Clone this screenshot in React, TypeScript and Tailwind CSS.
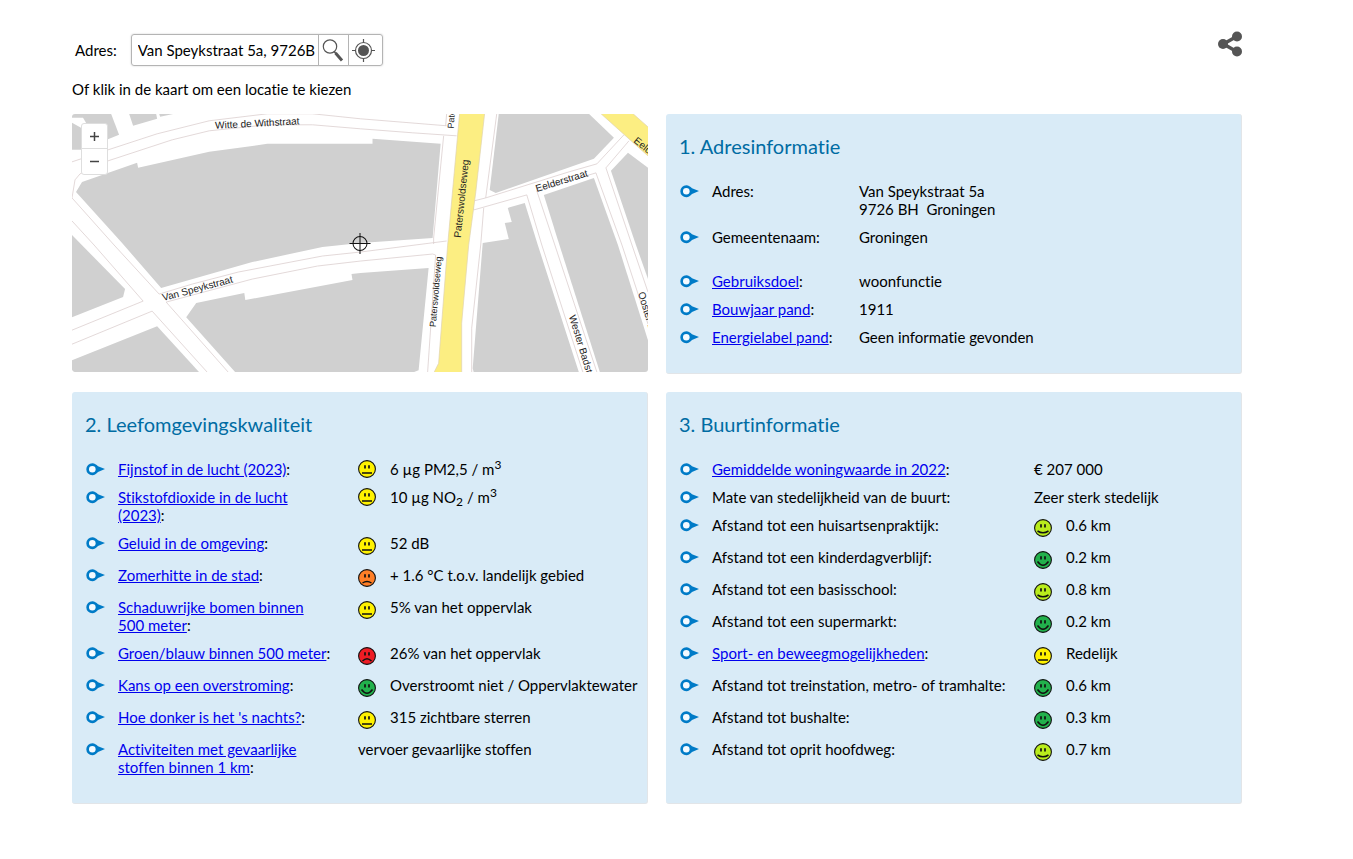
import React from 'react'

type Mood = 'green' | 'lime' | 'yellow' | 'orange' | 'red'

interface InfoRow {
  label: string
  link?: boolean
  mood?: Mood
  compact?: boolean
  spacious?: boolean
  value: React.ReactNode
}

const addressRows: InfoRow[] = [
  { label: 'Adres', value: <>Van Speykstraat 5a<br />9726 BH&nbsp; Groningen</> },
  { label: 'Gemeentenaam', spacious: true, value: 'Groningen' },
  { label: 'Gebruiksdoel', link: true, value: 'woonfunctie' },
  { label: 'Bouwjaar pand', link: true, value: '1911' },
  { label: 'Energielabel pand', link: true, value: 'Geen informatie gevonden' },
]

const qualityRows: InfoRow[] = [
  { label: 'Fijnstof in de lucht (2023)', link: true, mood: 'yellow', compact: true, value: <>6 µg PM2,5 / m<sup className="text-xs">3</sup></> },
  { label: 'Stikstofdioxide in de lucht (2023)', link: true, mood: 'yellow', compact: true, value: <>10 µg NO<sub className="text-xs">2</sub> / m<sup className="text-xs">3</sup></> },
  { label: 'Geluid in de omgeving', link: true, mood: 'yellow', value: '52 dB' },
  { label: 'Zomerhitte in de stad', link: true, mood: 'orange', value: '+ 1.6 °C t.o.v. landelijk gebied' },
  { label: 'Schaduwrijke bomen binnen 500\u00a0meter', link: true, mood: 'yellow', value: '5% van het oppervlak' },
  { label: 'Groen/blauw binnen 500\u00a0meter', link: true, mood: 'red', value: '26% van het oppervlak' },
  { label: 'Kans op een overstroming', link: true, mood: 'green', value: 'Overstroomt niet / Oppervlaktewater' },
  { label: "Hoe donker is het 's nachts?", link: true, mood: 'yellow', value: '315 zichtbare sterren' },
  { label: 'Activiteiten met gevaarlijke stoffen binnen 1 km', link: true, value: 'vervoer gevaarlijke stoffen' },
]

const neighbourhoodRows: InfoRow[] = [
  { label: 'Gemiddelde woningwaarde in 2022', link: true, value: '€ 207 000' },
  { label: 'Mate van stedelijkheid van de buurt', value: 'Zeer sterk stedelijk' },
  { label: 'Afstand tot een huisartsenpraktijk', mood: 'lime', value: '0.6 km' },
  { label: 'Afstand tot een kinderdagverblijf', mood: 'green', value: '0.2 km' },
  { label: 'Afstand tot een basisschool', mood: 'lime', value: '0.8 km' },
  { label: 'Afstand tot een supermarkt', mood: 'green', value: '0.2 km' },
  { label: 'Sport- en beweegmogelijkheden', link: true, mood: 'yellow', value: 'Redelijk' },
  { label: 'Afstand tot treinstation, metro- of tramhalte', mood: 'green', value: '0.6 km' },
  { label: 'Afstand tot bushalte', mood: 'green', value: '0.3 km' },
  { label: 'Afstand tot oprit hoofdweg', mood: 'lime', value: '0.7 km' },
]

const moodFill: Record<Mood, string> = {
  green: '#22b14c',
  lime: '#b9ec1c',
  yellow: '#fff200',
  orange: '#ff7f27',
  red: '#ed1c24',
}

const moodMouth: Record<Mood, string> = {
  green: 'M3.5 10.5Q9 18 14.5 10.5',
  lime: 'M3.5 12Q9 15.5 14.5 12',
  yellow: 'M4 13H14',
  orange: 'M4.5 14Q9 11 13.5 14',
  red: 'M4.5 14Q9 9.5 13.5 14',
}

const Smiley = ({ mood }: { mood: Mood }) => (
  <svg width="18" height="18" viewBox="0 0 18 18" fill="none" stroke="#111" aria-hidden="true">
    <circle cx="9" cy="9" r="8.4" fill={moodFill[mood]} strokeWidth="1.1" />
    <path d="M7 5.2V8.4M11 5.2V8.4" strokeWidth="1.7" />
    <path d={moodMouth[mood]} strokeWidth="1.5" />
  </svg>
)

const Bullet = () => (
  <svg width="20" height="13" viewBox="-1 0 20 13" aria-hidden="true">
    <path d="M6.3 0.2C8.8 0.2 10.2 1.6 12 3.2L19 6L12 9C10.2 10.6 8.8 12.2 6.3 12.2A6 6 0 0 1 6.3 0.2Z" fill="#007bc7" />
    <circle cx="6.3" cy="6.2" r="3.3" fill="#f4faff" />
  </svg>
)

const InfoTable = ({ rows, labelClass }: { rows: InfoRow[]; labelClass: string }) => (
  <table className="w-full table-fixed text-left">
    <colgroup>
      <col className="w-[33px]" />
      <col className={labelClass} />
      <col />
    </colgroup>
    <tbody>
      {rows.map(r => (
        <tr key={r.label} className="align-top">
          <td>
            <span className="flex h-[18px] items-center"><Bullet /></span>
          </td>
          <th scope="row" className={`${r.spacious ? 'pb-[26px]' : 'pb-[10px]'} pr-6 font-normal`}>
            {r.link ? <a href="#" className="text-[#0000ee] underline">{r.label}</a> : r.label}:
          </th>
          <td className="whitespace-nowrap">
            {r.mood ? (
              <div className={`flex items-start gap-[14px] ${r.compact ? 'h-7' : 'h-8'}`}>
                <span className={r.compact ? '' : 'pt-[3px]'}><Smiley mood={r.mood} /></span>
                <span>{r.value}</span>
              </div>
            ) : (
              <div className="pb-[10px]">{r.value}</div>
            )}
          </td>
        </tr>
      ))}
    </tbody>
  </table>
)

const Panel = ({ title, children }: { title: string; children: React.ReactNode }) => (
  <section className="rounded-[3px] border-r border-b border-[#e2e5e8] bg-[#d9ebf7] pt-5 pb-[17px] pl-[13px]">
    <h2 className="mb-6 text-xl leading-6 text-[#006ca3]">{title}</h2>
    {children}
  </section>
)

const LocationMap = () => (
  <div className="relative h-[258px] overflow-hidden rounded-[3px] bg-white">
    <svg className="h-full w-full" viewBox="0 0 575 258" preserveAspectRatio="xMidYMid slice" role="img" aria-label="Kaart">
      <g fill="#d0d0d0">
        <path d="M0 0H39L47 21L10 36H0Z" />
        <path d="M57 0L61 12L85 5L84 0ZM87 0L88 3L102 0Z" />
        <path d="M4 78L10 68L65 49L66 54L137 38L195 30H300V25L368 30L360 124L288 129L250 133L180 148L89 174L50 129Z" />
        <path d="M0 121L53 175L51 183L0 203Z" />
        <path d="M0 246L85 212L127 258H2L0 256Z" />
        <path d="M114 203L124 189L172 179L173 186L280 166L279 160L288 159L356 154L346 256L341 258H163Z" />
        <path d="M426 0L417 76L423 79L521 45L541 24L516 0Z" />
        <path d="M538 57L555 39L575 54V165L563 131Z" />
        <path d="M471 81L521 64L545 131L575 226V258H527L485 126Z" />
        <path d="M435 94L452 89L465 131L506 258H401L400 254L410 129L436 125L432 109L439 108Z" />
      </g>
      <path d="M0 4H11L14 9L9 14L0 9Z" fill="#fff" />
      <g fill="none" stroke="#dccfcf" strokeWidth="0.8">
        <path d="M0 48L36 36L85 20L137 7L195 0H240L288 5L374 12" />
        <path d="M0 84L3 66L8 60L36 47L100 26L137 17L195 11H240L288 15L340 19L384 22" />
        <path d="M0 84L42 131L87 180L120 170L166 158L250 142L288 138L374 127" />
        <path d="M0 107L22 131L71 187L0 216M0 230L80 197L135 258M94 188L156 258M94 188L180 165L245 152L288 147L360 140L363 141" />
        <path d="M374 0L373 12M371 22L361 124V130M363 141L355 258" />
        <path d="M424 0L413 84L496 58L524 50L551 21M400 86L401 96L454 81L469 131L510 258M411 94L408 131L399 214V258" />
        <path d="M464 77L482 131L524 258M464 77L523 59L549 131L575 210M533 54L556 27M533 54L559 131L575 178" />
        <path d="M401 87L413 84" />
      </g>
      <g fill="#fcee82" stroke="#dfd3b0" strokeWidth="0.7">
        <path d="M387 -1H412L403 79L396 131L389 209V259H361L366 249L375 131Z" />
        <path d="M527 -1H559L576 14V43Z" />
      </g>
      <g fill="#222" fontFamily="'Liberation Sans', Arial, sans-serif" fontSize="10">
        <text transform="translate(143 15) rotate(-3)">Witte de Withstraat</text>
        <text transform="translate(91 187) rotate(-15)">Van Speykstraat</text>
        <text transform="translate(388 124) rotate(-84)">Paterswoldseweg</text>
        <text transform="translate(363 213) rotate(-85)" fontSize="9">Paterswoldseweg</text>
        <text transform="translate(381 15) rotate(-86)" fontSize="9">Paterswoldseweg</text>
        <text transform="translate(464 78) rotate(-17)">Eelderstraat</text>
        <text transform="translate(560 28) rotate(39)">Eelderstraat</text>
        <text transform="translate(496 202) rotate(73)">Wester Badstraat</text>
        <text transform="translate(565 179) rotate(73)">Ooster Badstraat</text>
      </g>
      <g fill="none" stroke="#111">
        <circle cx="287.5" cy="129.5" r="7" />
        <path d="M277 129.5H298M287.5 119V140" />
      </g>
    </svg>
    <div className="absolute top-[9px] left-[9px] flex flex-col rounded-[3px] border border-[#dedede] bg-white text-[#444]">
      <button type="button" aria-label="Inzoomen" className="flex h-[25px] w-[25px] items-center justify-center border-b border-[#dedede]">
        <svg width="9" height="9" viewBox="0 0 9 9" stroke="currentColor" strokeWidth="1.5"><path d="M0 4.5H9M4.5 0V9" /></svg>
      </button>
      <button type="button" aria-label="Uitzoomen" className="flex h-[25px] w-[25px] items-center justify-center">
        <svg width="9" height="9" viewBox="0 0 9 9" stroke="currentColor" strokeWidth="1.5"><path d="M0 4.5H9" /></svg>
      </button>
    </div>
  </div>
)

const App: React.FC = () => {
  const [address, setAddress] = React.useState('Van Speykstraat 5a, 9726B')

  return (
    <main className="bg-white pt-[34px] pr-[111px] pb-12 pl-[72px] font-['Lato','Open_Sans',sans-serif] text-[15px] leading-[18px] text-black [font-variant-ligatures:none]">
      <header className="flex items-start justify-between">
        <form className="flex items-center gap-[14px] pl-[3px]" onSubmit={e => e.preventDefault()}>
          <label htmlFor="adres">Adres:</label>
          <div className="flex h-8 rounded-[3px] border border-[#b4b4b4] shadow-[0_0_2px_#ccc]">
            <input
              id="adres"
              type="text"
              value={address}
              onChange={e => setAddress(e.target.value)}
              className="w-[186px] pl-[6px] outline-none"
            />
            <button type="submit" aria-label="Zoeken" className="flex w-[30px] items-center justify-center border-l border-[#b4b4b4]">
              <svg width="22" height="24" viewBox="0 0 22 24" fill="none" stroke="#555">
                <circle cx="8" cy="8.5" r="6.7" strokeWidth="1.2" />
                <path d="M12 13.5L14 15.5" strokeWidth="1.6" />
                <path d="M13.5 15L20 22.5" strokeWidth="3" />
              </svg>
            </button>
            <button type="button" aria-label="Mijn locatie" className="flex w-[34px] items-center border-l border-[#b4b4b4] pl-[3px]">
              <svg width="23" height="23" viewBox="0 0 23 23" fill="none" stroke="#555">
                <circle cx="11.5" cy="11.5" r="8" strokeWidth="1.2" />
                <circle cx="11.5" cy="11.5" r="5.5" fill="#555" stroke="none" />
                <path d="M11.5 0V4M11.5 19V23M0 11.5H4M19 11.5H23" strokeWidth="1.2" />
              </svg>
            </button>
          </div>
        </form>
        <button type="button" aria-label="Delen">
          <svg width="24" height="20" viewBox="0 3 24 20" fill="#555" stroke="#555" className="overflow-visible">
            <path d="M18.5 5.5L5.5 13L18.5 20.5" fill="none" strokeWidth="3.5" />
            <circle cx="5" cy="13" r="5" stroke="none" />
            <circle cx="19" cy="5.5" r="5" stroke="none" />
            <circle cx="19" cy="20.5" r="5" stroke="none" />
          </svg>
        </button>
      </header>
      <p className="mt-[14px] mb-4">Of klik in de kaart om een locatie te kiezen</p>

      <div className="grid grid-cols-2 gap-[18px]">
        <LocationMap />
        <Panel title="1. Adresinformatie">
          <InfoTable rows={addressRows} labelClass="w-[147px]" />
        </Panel>
        <Panel title="2. Leefomgevingskwaliteit">
          <InfoTable rows={qualityRows} labelClass="w-60" />
        </Panel>
        <Panel title="3. Buurtinformatie">
          <InfoTable rows={neighbourhoodRows} labelClass="w-[322px]" />
        </Panel>
      </div>
    </main>
  )
}

export default App
